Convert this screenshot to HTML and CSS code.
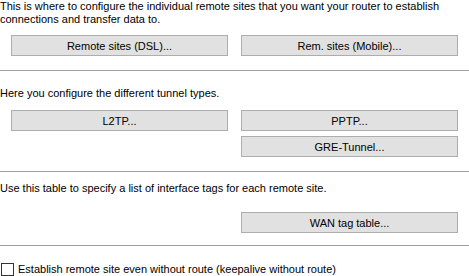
FILE: index.html
```html
<!DOCTYPE html>
<html lang="en">
<head>
  <meta charset="UTF-8">
  <title>Remote sites</title>
  <link rel="stylesheet" href="styles.css">
</head>
<body>
  <section class="group first">
    <p class="info">This is where to configure the individual remote sites that you want your router to establish connections and transfer data to.</p>
    <div class="buttons gap-dsl">
      <button>Remote sites (DSL)...</button>
      <button>Rem. sites (Mobile)...</button>
    </div>
  </section>

  <section class="group tunnels">
    <p class="info">Here you configure the different tunnel types.</p>
    <div class="buttons gap-tunnel">
      <button>L2TP...</button>
      <button>PPTP...</button>
      <span></span>
      <button>GRE-Tunnel...</button>
    </div>
  </section>

  <section class="group tags">
    <p class="info">Use this table to specify a list of interface tags for each remote site.</p>
    <div class="buttons gap-tags">
      <span></span>
      <button>WAN tag table...</button>
    </div>
  </section>

  <label class="check">
    <span class="box"></span>
    Establish remote site even without route (keepalive without route)
  </label>
</body>
</html>
```

FILE: styles.css
```css
body {
  margin: 0;
  width: 469px;
  font-family: "Liberation Sans", Arial, sans-serif;
  font-size: 11px;
  line-height: 13px;
  color: #000000;
  background-color: #ffffff;
}

.group {
  border-bottom: 1px solid #a0a0a0;
  padding-bottom: 14px;
}

.info {
  margin: 0;
  padding-right: 4px;
}

.tunnels {
  padding-top: 16px;
}

.tags {
  padding-top: 10px;
  padding-bottom: 12px;
}

.buttons {
  display: grid;
  grid-template-columns: 217px 217px;
  column-gap: 13px;
  row-gap: 5px;
  padding-left: 11px;
}

.gap-dsl {
  margin-top: 9px;
}

.gap-tunnel {
  margin-top: 10px;
}

.gap-tags {
  margin-top: 17px;
}

button {
  height: 21px;
  box-sizing: border-box;
  border: 1px solid #adadad;
  background-color: #e1e1e1;
  font-family: inherit;
  font-size: 11px;
  color: #000000;
  padding: 0;
}

.check {
  display: flex;
  align-items: center;
  gap: 4px;
  margin-top: 17px;
  padding-left: 1px;
}

.box {
  width: 13px;
  height: 13px;
  box-sizing: border-box;
  border: 1px solid #333333;
  background-color: #ffffff;
}
```
